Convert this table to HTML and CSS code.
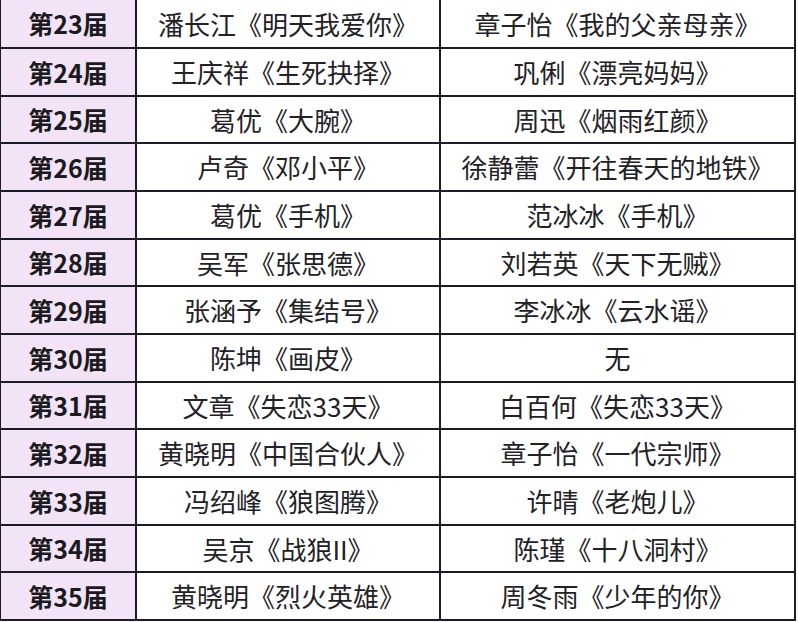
FILE: index.html
```html
<!DOCTYPE html>
<html lang="zh">
<head>
<meta charset="utf-8">
<title>影帝影后</title>
<link rel="stylesheet" href="styles.css">
</head>
<body>
<table class="awards">
<tbody>
<tr class="r48"><th>第23届</th><td>潘长江《明天我爱你》</td><td>章子怡《我的父亲母亲》</td></tr>
<tr class="r48"><th>第24届</th><td>王庆祥《生死抉择》</td><td>巩俐《漂亮妈妈》</td></tr>
<tr class="r47"><th>第25届</th><td>葛优《大腕》</td><td>周迅《烟雨红颜》</td></tr>
<tr class="r48"><th>第26届</th><td>卢奇《邓小平》</td><td>徐静蕾《开往春天的地铁》</td></tr>
<tr class="r48"><th>第27届</th><td>葛优《手机》</td><td>范冰冰《手机》</td></tr>
<tr class="r47"><th>第28届</th><td>吴军《张思德》</td><td>刘若英《天下无贼》</td></tr>
<tr class="r48"><th>第29届</th><td>张涵予《集结号》</td><td>李冰冰《云水谣》</td></tr>
<tr class="r48"><th>第30届</th><td>陈坤《画皮》</td><td>无</td></tr>
<tr class="r47"><th>第31届</th><td>文章《失恋33天》</td><td>白百何《失恋33天》</td></tr>
<tr class="r48"><th>第32届</th><td>黄晓明《中国合伙人》</td><td>章子怡《一代宗师》</td></tr>
<tr class="r48"><th>第33届</th><td>冯绍峰《狼图腾》</td><td>许晴《老炮儿》</td></tr>
<tr class="r47"><th>第34届</th><td>吴京《战狼II》</td><td>陈瑾《十八洞村》</td></tr>
<tr class="r48"><th>第35届</th><td>黄晓明《烈火英雄》</td><td>周冬雨《少年的你》</td></tr>
</tbody>
</table>
</body>
</html>
```
FILE: styles.css
```css
html, body {
  margin: 0;
  padding: 0;
  background: #fbfbfb;
}
.awards {
  border-collapse: collapse;
  table-layout: fixed;
  width: 797px;
  margin-left: -1px;
  font-family: "Noto Sans CJK SC", "Noto Sans", sans-serif;
  color: #1b1b1f;
}
.awards th, .awards td {
  border: 2px solid #1c1c26;
  padding: 0;
  text-align: center;
  vertical-align: middle;
  line-height: 1;
}
.awards tr:first-child th, .awards tr:first-child td {
  border-top: none;
}
.awards th {
  width: 134px;
  background: #f2e4f6;
  font-weight: 700;
  font-size: 25px;
}
.awards td {
  background: #ffffff;
  font-weight: 400;
  font-size: 26px;
  color: #222226;
}
.awards td:nth-child(2) {
  width: 302px;
}
.r48 { height: 48px; }
.r47 { height: 47px; }
```
